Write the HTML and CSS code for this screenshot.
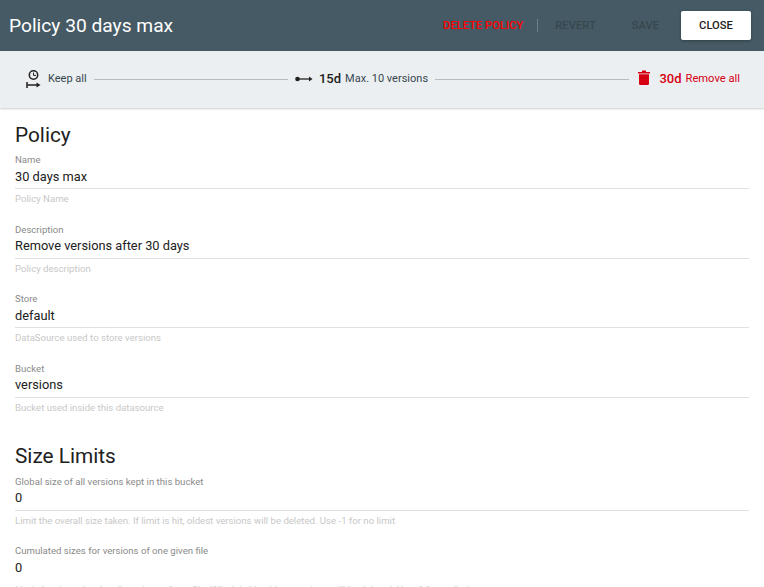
FILE: index.html
```html
<!DOCTYPE html>
<html lang="en">
<head>
  <meta charset="UTF-8">
  <title>Policy 30 days max</title>
  <link rel="stylesheet" href="styles.css">
</head>
<body>
  <div class="panel">
    <header class="titlebar">
      <h1>Policy 30 days max</h1>
      <div class="actions">
        <button class="btn btn-delete">DELETE POLICY</button>
        <span class="divider"></span>
        <button class="btn btn-muted btn-revert">REVERT</button>
        <button class="btn btn-muted btn-save">SAVE</button>
        <button class="btn btn-close">CLOSE</button>
      </div>
    </header>

    <div class="timeline">
      <div class="step">
        <svg class="icon-clock" width="15" height="20" viewBox="0 0 15 20">
          <circle cx="7.5" cy="6" r="4.2" fill="none" stroke="#212121" stroke-width="1.5"/>
          <path d="M7.5 3.6V6.4H10" fill="none" stroke="#212121" stroke-width="1"/>
          <path d="M1 13v6" stroke="#212121" stroke-width="1.5"/>
          <path d="M1 16h10" stroke="#212121" stroke-width="1.5"/>
          <path d="M10.5 13.5l4 2.5-4 2.5z" fill="#212121"/>
        </svg>
        <span class="step-label">Keep all</span>
      </div>
      <span class="line"></span>
      <div class="step">
        <svg class="icon-arrow" width="18" height="8" viewBox="0 0 18 8">
          <circle cx="2.5" cy="4" r="2.3" fill="#212121"/>
          <path d="M2 4h13" stroke="#212121" stroke-width="1.3"/>
          <path d="M14 1.6l3.5 2.4-3.5 2.4z" fill="#212121"/>
        </svg>
        <span class="step-days">15d</span>
        <span class="step-label">Max. 10 versions</span>
      </div>
      <span class="line"></span>
      <div class="step step-remove">
        <svg class="icon-trash" width="12" height="15" viewBox="0 0 12 15">
          <path d="M0 2h12v1.5H0zM4 0.5h4V2H4z" fill="#d50012"/>
          <path d="M1 4.2h10V13.5A1.5 1.5 0 0 1 9.5 15h-7A1.5 1.5 0 0 1 1 13.5z" fill="#d50012"/>
        </svg>
        <span class="step-days">30d</span>
        <span class="step-label">Remove all</span>
      </div>
    </div>

    <main class="form">
      <h2>Policy</h2>
      <div class="field">
        <label>Name</label>
        <div class="value">30 days max</div>
        <div class="hint">Policy Name</div>
      </div>
      <div class="field">
        <label>Description</label>
        <div class="value">Remove versions after 30 days</div>
        <div class="hint">Policy description</div>
      </div>
      <div class="field">
        <label>Store</label>
        <div class="value">default</div>
        <div class="hint">DataSource used to store versions</div>
      </div>
      <div class="field">
        <label>Bucket</label>
        <div class="value">versions</div>
        <div class="hint">Bucket used inside this datasource</div>
      </div>

      <h2 class="section">Size Limits</h2>
      <div class="field">
        <label>Global size of all versions kept in this bucket</label>
        <div class="value">0</div>
        <div class="hint">Limit the overall size taken. If limit is hit, oldest versions will be deleted. Use -1 for no limit</div>
      </div>
      <div class="field field-last">
        <label>Cumulated sizes for versions of one given file</label>
        <div class="value">0</div>
        <div class="hint">Limit the size taken by all versions of one file. If limit is hit, oldest versions will be deleted. Use -1 for no limit</div>
      </div>
    </main>
  </div>
</body>
</html>
```

FILE: styles.css
```css
html, body {
  height: 100%;
}

body {
  margin: 0;
  font-family: Roboto, "Liberation Sans", sans-serif;
  color: #212121;
  background-color: #fff;
  overflow: hidden;
}

.titlebar {
  display: flex;
  align-items: center;
  justify-content: space-between;
  height: 51px;
  padding: 0 13px 0 9px;
  background-color: #455a64;
}

h1 {
  margin: 0;
  font-size: 19.2px;
  font-weight: 400;
  color: #fff;
}

.actions {
  display: flex;
  align-items: center;
}

.btn {
  border: none;
  background: none;
  padding: 0;
  font-family: inherit;
  font-size: 11.2px;
  font-weight: 500;
  cursor: pointer;
}

.btn-delete {
  color: #f00;
}

.divider {
  width: 1px;
  height: 13px;
  margin: 0 17px 0 14px;
  background-color: #6d7f88;
}

.btn-muted {
  color: #37474f;
}

.btn-revert {
  margin-right: 36px;
}

.btn-save {
  margin-right: 22px;
}

.btn-close {
  width: 70px;
  height: 29px;
  background-color: #fff;
  color: #212121;
  border-radius: 2px;
  box-shadow: 0 1px 3px rgba(0, 0, 0, 0.3);
}

.timeline {
  display: flex;
  align-items: center;
  height: 57px;
  padding: 0 24px 2px 26px;
  box-sizing: border-box;
  background-color: #eceff1;
  box-shadow: 0 1px 2px rgba(0, 0, 0, 0.2);
}

.step {
  display: flex;
  align-items: center;
  font-size: 11px;
}

.step-label {
  color: #37474f;
}

.step-days {
  margin-right: 4px;
  font-size: 13px;
  font-weight: 500;
}

.icon-clock {
  margin-right: 7px;
}

.icon-arrow {
  margin-right: 6px;
}

.icon-trash {
  margin-right: 9px;
  margin-bottom: 2px;
}

.step-remove {
  margin-left: 2px;
}

.step-remove,
.step-remove .step-label,
.step-remove .step-days {
  color: #d50012;
}

.step-remove .step-label {
  font-size: 11.2px;
}

.line {
  flex: 1;
  height: 1px;
  margin: 2px 7px 0;
  background-color: #b6bcbf;
}

.form {
  padding: 14px 15px 0;
}

h2 {
  margin: 0 0 6.3px;
  font-size: 20.8px;
  font-weight: 400;
  line-height: 26px;
  color: #212121;
}

h2.section {
  margin-top: 30.7px;
}

.field {
  margin-bottom: 19.5px;
}

label {
  display: block;
  font-size: 9.6px;
  line-height: 11px;
  color: #8a8a8a;
}

.value {
  padding: 3.7px 0 4.3px;
  font-size: 12.8px;
  line-height: 15px;
  border-bottom: 1px solid #e0e0e0;
}

.field-last .value {
  border-bottom-color: transparent;
}

.hint {
  margin-top: 4px;
  font-size: 9.6px;
  line-height: 11px;
  color: #c8c8c8;
}
```
